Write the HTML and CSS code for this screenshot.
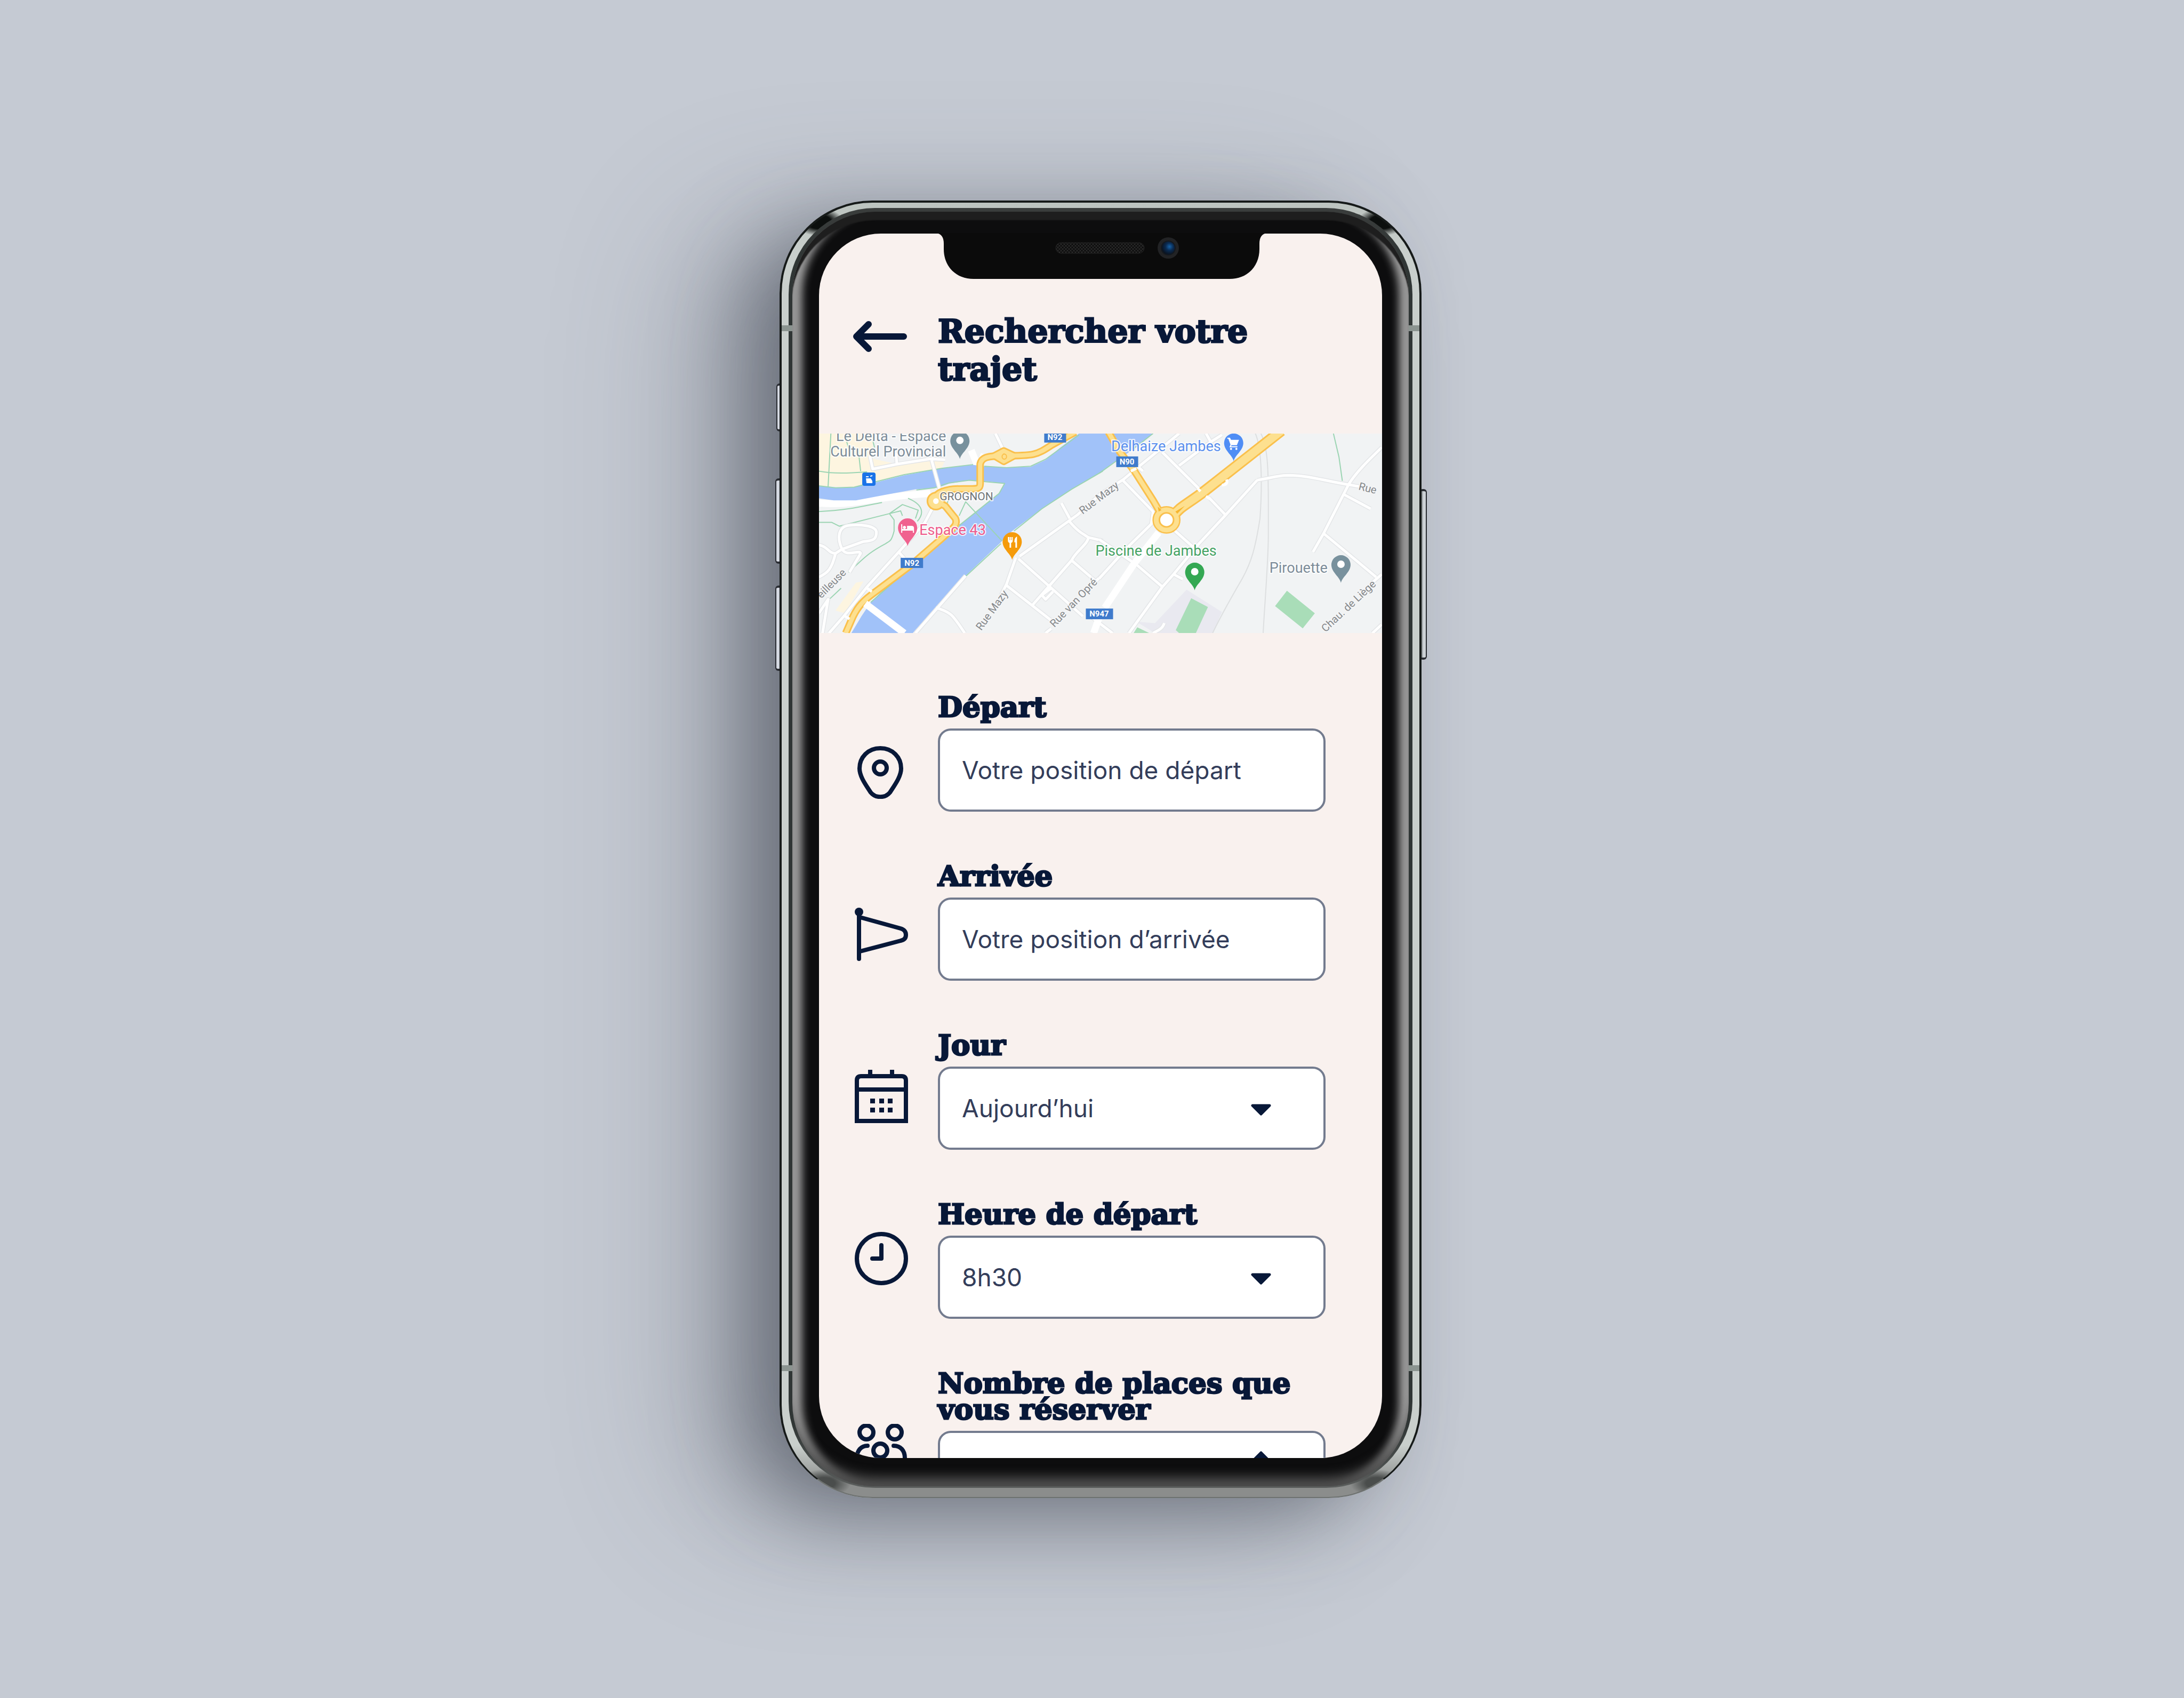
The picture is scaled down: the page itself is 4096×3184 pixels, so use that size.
FILE: index.html
```html
<!DOCTYPE html>
<html lang="fr">
<head>
<meta charset="utf-8">
<meta name="viewport" content="width=device-width, initial-scale=1">
<title>Rechercher votre trajet</title>
<link rel="stylesheet" href="styles.css">
</head>
<body>
<div class="stage">
  <div class="phone">
    <span class="side-key side-key-mute"></span>
    <span class="side-key side-key-up"></span>
    <span class="side-key side-key-down"></span>
    <span class="side-key side-key-power"></span>
    <div class="frame">
      <span class="antenna antenna-top"></span>
      <span class="antenna antenna-bottom"></span>
      <div class="rim">
        <div class="glass">
          <main class="screen">
            <header class="topbar">
              <button class="back" type="button" aria-label="Retour">
                <svg class="back-icon" viewBox="0 0 101 58" aria-hidden="true"><path d="M29 6 6 29l23 23M6 29h89"/></svg>
              </button>
              <h1 class="title">Rechercher votre trajet</h1>
            </header>

            <svg class="map" viewBox="0 0 1055 374" preserveAspectRatio="xMidYMid slice" role="img" aria-label="Carte de Jambes">
              <defs>
                <path id="pin" d="M0 0C-2-11-18-20-18-34A18 18 0 0 1 18-34C18-20 2-11 0 0Z"/>
                <path id="left-streets" d="M315 240 330 335 460 300 640 262 720 268M455 220 460 300M645 262 690 480M990 80 1030 190M650 620 610 720 470 930 300 1180 175 1390 95 1512M470 930 500 975M165 910C140 840 140 750 200 740S350 740 350 790 330 850 280 855L165 910C190 970 260 910 265 940L205 1075M40 880C90 890 90 940 130 940L165 910M130 940C110 1050 90 1080 40 1110M40 1370 90 1270 60 1512M1120 960 1430 665 1568 500M1385 705C1430 780 1460 800 1490 825L1568 850M1490 825C1490 870 1420 930 1400 990L1190 1310M1400 990 1530 1140 1568 1090M1100 970 1050 1160 1020 1240M1115 980 1460 1390M1050 1170 1290 1420M1345 580 1390 690M1290 1190 1240 1240 1260 1270 1300 1215M830 1100 560 1512M670 1330C750 1360 760 1380 825 1512M1260 1512 1290 1480M1620 1512 1510 1400"/>
                <path id="right-streets" d="M0 520 130 410 220 310 330 190 430 80M575 80 600 140 660 90M600 140 430 310M340 215 540 480M590 540 680 665M130 420 290 640 280 730 150 900 0 1120M210 320 235 350M0 840 200 1020 340 1180M400 770 510 900M850 415 680 665 530 880 400 1090 340 1180 160 1512M850 415C960 390 960 380 1030 380 1150 385 1200 420 1400 460M1520 180C1450 270 1380 360 1340 450L1210 790 1150 930M1210 800 1490 1110M1520 1090 1460 1160M1320 520 1460 620M400 1090 450 1125M350 1440C340 1490 300 1500 290 1512M1520 1450 1470 1512"/>
                <path id="n92" d="M185 1512 215 1420C240 1340 270 1290 320 1240L430 1130 540 1020 600 950 700 835C760 760 790 740 775 690L720 600 670 565C650 500 740 478 790 478 880 475 908 490 908 440V300C915 250 950 240 1035 240 1200 240 1210 235 1290 165L1420 70"/>
                <path id="n90" d="M50 70 110 210 190 350 290 560 325 640"/>
                <path id="n90-east" d="M980 60 560 500C470 590 430 610 400 670"/>
              </defs>
              <rect class="land" width="1055" height="374"/>
              <!-- west bank -->
              <g class="survey" transform="matrix(.3483 0 0 .2612 -14.3 -20.9)">
                <path class="built" d="M40 80H330V260L460 300 720 270 700 330 500 380 350 420 230 465 40 455ZM240 1150 280 1140 180 1370 130 1350Z"/>
                <path class="avenue-white" d="M40 580C250 600 280 540 640 510M860 200 900 330 930 230"/>
                <path class="water" d="M1440 80 1340 180 1260 270 1180 320 1050 325 930 315 870 305 700 330 500 380 350 430 230 465 130 470 40 455V545L120 560H240L400 520 560 480 680 470 740 440 850 415 960 425 1040 440 1010 510 880 650 780 760 600 980 440 1130 320 1290 270 1390 215 1512H545L640 1370 830 1100 1020 860 1080 780 1240 620 1400 480 1568 350 1648 270 1728 195 1838 80Z"/>
                <path class="path" d="M105 80 90 460M190 140 205 200M255 230 265 350M330 130 340 180M40 350C120 370 200 365 300 355M40 455 130 470 230 465 350 425 500 375 700 330 870 303M930 315 1050 325 1180 315 1260 265 1440 90M565 485 660 470 740 435 850 415 1040 438 1010 510 795 740M600 980 440 1150 320 1290M40 640C200 630 280 600 380 575M40 718H110L150 745 420 655 490 590 575 630 560 690M520 545C600 590 610 650 570 710M420 655 445 700V780C430 860 420 850 400 870 300 940 280 980 200 1075M420 655 480 635 490 670M160 1190 100 1265M730 580 740 550M795 670 830 570 1025 850M830 1105 1020 870M1090 780 1240 620 1400 480 1568 350"/>
                <use href="#left-streets" class="street-edge"/>
                <use href="#left-streets" class="street"/>
                <ellipse class="main-edge" cx="670" cy="565" rx="30" ry="40"/>
                <path class="main-edge" d="M985 240 1035 205 1090 240 1035 280Z"/>
                <use href="#n92" class="main-edge"/>
                <use href="#n92" class="main"/>
                <ellipse class="hub" cx="670" cy="565" rx="28" ry="38"/>
                <path class="main" d="M985 240 1035 205 1090 240 1035 280Z"/>
                <ellipse class="hub-dot" cx="1038" cy="246" rx="12" ry="18"/>
                <path class="bridge" d="M290 1300 500 1512"/>
                <path class="crossing" d="M300 1190 325 1215M175 1385 205 1410"/>
              </g>
              <!-- east bank -->
              <g class="survey" transform="matrix(.3483 0 0 .2612 525 -20.9)">
                <path class="campus" d="M470 1200 660 1360 610 1512H300L200 1430 300 1440Z"/>
                <path class="park" d="M495 1262 585 1325 520 1512H430L412 1490ZM1010 1208 1160 1370 1095 1478 946 1318ZM205 1470 270 1512H185Z"/>
                <path class="rail" d="M840 80C880 200 875 500 865 690 840 900 820 1000 770 1120 700 1280 650 1400 610 1512M870 80C915 200 910 400 910 800 910 1000 890 1300 882 1512"/>
                <path class="path" d="M180 195 290 80M1260 80 1290 250 1308 420M0 365 100 270"/>
                <use href="#right-streets" class="street-edge"/>
                <use href="#right-streets" class="street"/>
                <path class="avenue-white" d="M320 790 190 1010 30 1330M0 1400-30 1512"/>
                <ellipse class="ring-edge" cx="362" cy="700" rx="54" ry="70"/>
                <use href="#n90" class="main-edge"/>
                <use href="#n90-east" class="wide-edge"/>
                <use href="#n90" class="main"/>
                <use href="#n90-east" class="wide"/>
                <ellipse class="ring" cx="362" cy="700" rx="54" ry="70"/>
                <ellipse class="ring-core" cx="362" cy="700" rx="38" ry="50"/>
                <path class="wedge" d="M315 605 335 630 320 640ZM410 640 460 600 420 655Z"/>
                <path class="crossing" d="M530 475 545 495M575 530 595 550M660 450C690 450 690 430 685 410M170 350 200 330"/>
              </g>
              <g class="road-names">
                <text transform="translate(52 262) rotate(-45)" text-anchor="end">eilleuse</text>
                <text transform="translate(304 370) rotate(-54)">Rue Mazy</text>
                <text transform="translate(494 152) rotate(-37)">Rue Mazy</text>
                <text transform="translate(441 364) rotate(-46)">Rue van Opré</text>
                <text transform="translate(1010 105) rotate(14)">Rue</text>
                <text transform="translate(949 373) rotate(-43)">Chau. de Liège</text>
              </g>
              <g class="shields">
                <rect x="422" y="-4" width="41" height="21"/><text x="442" y="12">N92</text>
                <rect x="153" y="233" width="42" height="19"/><text x="174" y="248">N92</text>
                <rect x="557" y="43" width="41" height="20"/><text x="577" y="58">N90</text>
                <rect x="500" y="328" width="51" height="20"/><text x="525" y="343">N947</text>
              </g>
              <g class="places">
                <text class="slate" x="238" y="14" text-anchor="end">Le Delta - Espace</text>
                <text class="slate" x="238" y="43" text-anchor="end">Culturel Provincial</text>
                <text class="district" x="226" y="125">GROGNON</text>
                <text class="pink" x="188" y="190">Espace 43</text>
                <text class="blue" x="753" y="33" text-anchor="end">Delhaize Jambes</text>
                <text class="green" x="745" y="229" text-anchor="end">Piscine de Jambes</text>
                <text class="slate" x="953" y="261" text-anchor="end">Pirouette</text>
              </g>
              <g class="pins">
                <use href="#pin" x="264" y="48" fill="#78919d"/><circle cx="264" cy="13" r="7"/>
                <use href="#pin" x="166" y="211" fill="#f0628f"/>
                <path d="M154 170v16h2v-4h20v4h2v-9q0-4-5-4h-8v6h-9v-9zM160 173a3 3 0 1 0 .1 0"/>
                <use href="#pin" x="362" y="237" fill="#f59b0b"/>
                <path d="M354 194v7q0 3 3 4v9h3v-9q3-1 3-4v-7h-2v6h-1v-6h-2v6h-1v-6zM371 193q-5 2-5 11h2v10h3z"/>
                <use href="#pin" x="777" y="52" fill="#4f8df5"/>
                <path d="M765 8h5l2 4h15l-4 10h-10l-1 2h12v2h-15l2-5-4-11h-2zM772 27a2 2 0 1 0 .1 0M782 27a2 2 0 1 0 .1 0"/>
                <use href="#pin" x="704" y="294" fill="#34a853"/><circle cx="704" cy="259" r="7"/>
                <use href="#pin" x="978" y="280" fill="#78919d"/><circle cx="978" cy="245" r="7"/>
                <rect class="ferry" x="81" y="73" width="25" height="25" rx="4"/>
                <path d="M88 84h9l3 5v4H89zM88 80h5v2h-5zM96 79l4-1v2l-4 1z"/>
              </g>
            </svg>

            <form class="trip">
              <div class="icons" aria-hidden="true">
                <svg class="icon" viewBox="0 0 100 100"><path d="M48 5C25 5 9 22 9 43c0 15 12 31 21 45 9 11 27 11 36 0 9-14 21-30 21-45C87 22 71 5 48 5Z"/><circle cx="48" cy="42" r="12"/></svg>
                <svg class="icon" viewBox="0 0 100 100"><path d="M8 8v88M10 18l76 21q10 3 10 12t-10 11L10 82"/><circle class="solid" cx="8" cy="8" r="8"/></svg>
                <svg class="icon" viewBox="0 0 100 100"><path class="square" d="M4 96V20q0-8 8-8h76q8 0 8 8v76zM4 37h92M29 0v12M70 0v12"/><path class="solid" d="M29 54h9v9h-9zM46 54h9v9h-9zM62 54h9v9h-9zM29 71h9v9h-9zM46 71h9v9h-9zM62 71h9v9h-9z"/></svg>
                <svg class="icon" viewBox="0 0 100 100"><circle cx="50" cy="50" r="46"/><path d="M50 25v25H33"/></svg>
                <svg class="icon icon-people" viewBox="0 0 100 100"><circle cx="22" cy="16" r="13"/><circle cx="75" cy="16" r="13"/><circle cx="48" cy="50" r="13"/><path d="M24 41C12 41 4 50 4 64v10M73 41c13 0 21 9 21 23v10M20 100c0-16 10-26 29-26s29 10 29 26"/></svg>
              </div>
              <div class="fields">
                <div class="field">
                  <label class="label" for="depart">Départ</label>
                  <input class="control" id="depart" type="text" placeholder="Votre position de départ">
                </div>
                <div class="field">
                  <label class="label" for="arrivee">Arrivée</label>
                  <input class="control" id="arrivee" type="text" placeholder="Votre position d’arrivée">
                </div>
                <div class="field">
                  <label class="label" for="jour">Jour</label>
                  <div class="picker">
                    <select class="control" id="jour"><option>Aujourd’hui</option></select>
                    <svg class="caret" viewBox="0 0 38 22" aria-hidden="true"><path d="M3 3h32L19 19Z"/></svg>
                  </div>
                </div>
                <div class="field">
                  <label class="label" for="heure">Heure de départ</label>
                  <div class="picker">
                    <select class="control" id="heure"><option>8h30</option></select>
                    <svg class="caret" viewBox="0 0 38 22" aria-hidden="true"><path d="M3 3h32L19 19Z"/></svg>
                  </div>
                </div>
                <div class="field">
                  <label class="label" for="places">Nombre de places que vous réserver</label>
                  <div class="picker">
                    <input class="control" id="places" type="text" inputmode="numeric">
                    <svg class="caret caret-up" viewBox="0 0 38 22" aria-hidden="true"><path d="M3 19h32L19 3Z"/></svg>
                  </div>
                </div>
              </div>
            </form>
          </main>
          <svg class="notch" viewBox="0 0 620 86" aria-hidden="true">
            <defs>
              <pattern id="mesh" width="6" height="6" patternUnits="userSpaceOnUse"><path d="M0 3 3 0 6 3 3 6Z" fill="none" stroke="#2e2e2e"/></pattern>
              <radialGradient id="lens" cx=".6" cy=".4" r=".6"><stop offset="0" stop-color="#1763a8"/><stop offset=".5" stop-color="#0a2b52"/><stop offset="1" stop-color="#0a1422"/></radialGradient>
            </defs>
            <path d="M0 0Q14 2 14 20V30C14 62 36 86 70 86H550C584 86 606 62 606 30V20Q606 2 620 0Z" fill="#0b0b0b"/>
            <rect x="224" y="18" width="166" height="20" rx="10" fill="#101010"/>
            <rect x="224" y="18" width="166" height="20" rx="10" fill="url(#mesh)" stroke="#242424"/>
            <circle cx="435" cy="28" r="20" fill="#222325"/>
            <circle cx="435" cy="28" r="14" fill="#15191f"/>
            <circle cx="435" cy="28" r="12" fill="url(#lens)"/>
          </svg>
        </div>
      </div>
    </div>
  </div>
</div>
</body>
</html>
```
FILE: styles.css
```css
:root {
  --ink: #081838;
  --paper: #f9f1ee;
  --line: #737b8e;
  --display: "DejaVu Serif", serif;
  --text: Inter, "Noto Sans", sans-serif;
}

* { box-sizing: border-box; }

body {
  margin: 0;
  background: #c5cad3;
  color: var(--ink);
  font-family: var(--text);
}

.stage {
  display: flex;
  align-items: center;
  justify-content: center;
  min-height: 100vh;
  padding-left: 32px;
  overflow: hidden;
}

/* ---------- device ---------- */

.phone {
  position: relative;
  width: 100%;
  max-width: 1204px;
  aspect-ratio: 1204 / 2433;
  border-radius: 174px;
  box-shadow:
    -180px 36px 250px rgba(80, 86, 98, .26),
    -76px 40px 160px -20px rgba(54, 60, 72, .6);
}

.frame {
  position: relative;
  height: 100%;
  padding: 10px 13px 17px;
  border: 4px solid #161a19;
  border-bottom: 2px solid #6d716f;
  border-radius: 174px;
  background:
    radial-gradient(ellipse 46px 26px at 70px 36px, #0c0f0e 50%, transparent),
    radial-gradient(ellipse 46px 26px at calc(100% - 70px) 36px, #0c0f0e 50%, transparent),
    radial-gradient(ellipse 50px 26px at 80px calc(100% - 26px), #4a4d4c 40%, transparent),
    radial-gradient(ellipse 50px 26px at calc(100% - 80px) calc(100% - 26px), #4a4d4c 40%, transparent),
    linear-gradient(#bcc3bf 0, #c9cfcc 4%, #c9cfcc 96%, #8b8d8c 99%);
}

.rim {
  height: 100%;
  padding: 7px 7px 3px;
  border-radius: 162px;
  background: linear-gradient(#3a3d3c, #303635 4%, #303635 95%, #5a5d5c);
}

.glass {
  position: relative;
  height: 100%;
  padding: 41px 50px 53px;
  border-radius: 156px;
  background: #0d0d0e;
  box-shadow:
    inset 0 18px 2px -2px #1e1e1e,
    inset 0 -26px 20px -8px #4c4c4c,
    inset 26px 0 16px -8px #a2a2a2,
    inset -26px 0 16px -8px #a2a2a2;
}

.antenna {
  position: absolute;
  right: 0;
  left: 0;
  height: 11px;
  background: #8b9490;
}

.antenna-top { top: 230px; }
.antenna-bottom { bottom: 236px; }

.side-key {
  position: absolute;
  left: -8px;
  width: 14px;
  height: 160px;
  border: 2px solid #2a2d33;
  border-width: 4px 0 4px 2px;
  border-radius: 6px;
  background: linear-gradient(90deg, #d5d9e2 40%, #858b95 60%);
}

.side-key-mute { top: 343px; left: -6px; height: 90px; }
.side-key-up { top: 521px; }
.side-key-down { top: 722px; }

.side-key-power {
  top: 541px;
  right: -10px;
  left: auto;
  height: 320px;
  border-width: 4px 2px 4px 0;
  background: linear-gradient(270deg, #cdd2d6 40%, #858b8e 60%);
}

.notch {
  position: absolute;
  top: 40px;
  left: 50%;
  width: 620px;
  height: 86px;
  margin-left: -308px;
}

/* ---------- screen ---------- */

.screen {
  height: 100%;
  border-radius: 116px;
  background: var(--paper);
  overflow: hidden;
}

.topbar {
  display: flex;
  align-items: flex-start;
  gap: 56px;
  height: 375px;
  padding: 148px 106px 0 64px;
}

.back {
  flex: none;
  width: 103px;
  margin: 0;
  padding: 16px 0 0;
  border: 0;
  background: none;
  cursor: pointer;
}

.back-icon {
  display: block;
  width: 101px;
  height: 58px;
  fill: none;
  stroke: var(--ink);
  stroke-width: 12;
  stroke-linecap: round;
  stroke-linejoin: round;
}

.title {
  flex: 1;
  margin: 0;
  font: 700 60px/71px var(--display);
  -webkit-text-stroke: 3px var(--ink);
}

.trip {
  display: flex;
  gap: 56px;
  padding: 114px 106px 0 67px;
}

.icons {
  display: flex;
  flex: none;
  flex-direction: column;
  gap: 204px;
  padding-top: 97px;
}

.icon {
  width: 100px;
  height: 100px;
  fill: none;
  stroke: var(--ink);
  stroke-width: 8;
  stroke-linecap: round;
  stroke-linejoin: round;
}

.icon .solid { fill: var(--ink); stroke: none; }
.icon .square { stroke-linecap: butt; stroke-linejoin: miter; }
.icon-people { margin-top: 56px; }

.fields {
  display: flex;
  flex: 1;
  flex-direction: column;
  gap: 96px;
  min-width: 0;
}

.field {
  display: flex;
  flex-direction: column;
  gap: 16px;
}

.label {
  font: 700 53px/49px var(--display);
  -webkit-text-stroke: 3px var(--ink);
}

.control {
  display: block;
  width: 100%;
  height: 156px;
  margin: 0;
  padding: 0 41px;
  border: 4px solid var(--line);
  border-radius: 24px;
  background: #fff;
  color: #333d5a;
  font: 400 46px/56px var(--text);
  appearance: none;
}

.control::placeholder { color: #333d5a; opacity: 1; }

.picker { position: relative; }

.caret {
  position: absolute;
  top: 70px;
  right: 102px;
  width: 38px;
  height: 22px;
  fill: var(--ink);
  stroke: var(--ink);
  stroke-width: 5;
  stroke-linejoin: round;
  pointer-events: none;
}

.caret-up { top: 38px; }

/* ---------- map ---------- */

.map {
  display: block;
  width: 100%;
  height: 374px;
  overflow: hidden;
}

.survey *,
.map defs path { vector-effect: non-scaling-stroke; stroke-linejoin: round; }

.land { fill: #f1f3f4; }
.built { fill: #fdf5e0; }
.water { fill: #a1c2f9; }
.campus { fill: #e9e9f0; }
.park { fill: #a9ddb8; }
.path, .rail { fill: none; stroke: #9bd4b2; stroke-width: 2; }
.rail { stroke: #dddfe0; }
.street-edge { fill: none; stroke: #e4e6e8; stroke-width: 8; }
.street { fill: none; stroke: #fff; stroke-width: 5; }
.avenue-white { fill: none; stroke: #fff; stroke-width: 13; }
.main-edge { fill: none; stroke: #fac04c; stroke-width: 14; }
.main { fill: none; stroke: #fde08f; stroke-width: 8; }
.wide-edge { fill: none; stroke: #fac04c; stroke-width: 21; }
.wide { fill: none; stroke: #fde08f; stroke-width: 15; }
.hub { fill: #fff; stroke: #fde08f; stroke-width: 9; }
.hub-dot { fill: #fde08f; stroke: #fac04c; stroke-width: 2; }
.ring-edge { fill: #fff; stroke: #fac04c; stroke-width: 15; }
.ring { fill: #fff; stroke: #fde08f; stroke-width: 10; }
.ring-core { fill: #fff; stroke: #fac04c; stroke-width: 3; }
.wedge { fill: #f7b62f; }
.bridge { fill: none; stroke: #fff; stroke-width: 13; }
.crossing { fill: none; stroke: #fff; stroke-width: 5; }

.road-names {
  fill: #85888b;
  font: 400 20px Roboto, sans-serif;
  stroke: #f4f5f6;
  stroke-width: 4;
  paint-order: stroke;
}

.shields { fill: #3f7bcc; }
.shields text { fill: #fff; font: 700 15px Roboto, sans-serif; text-anchor: middle; }

.places {
  font: 400 27px Roboto, sans-serif;
  stroke: rgba(255, 255, 255, .8);
  stroke-width: 4;
  stroke-linejoin: round;
  paint-order: stroke;
}

.slate { fill: #7d8c99; }
.pink { fill: #ee5c8c; }
.blue { fill: #5b90ee; }
.green { fill: #46a364; }
.district { fill: #6f7478; font-size: 21px; }

.pins { fill: #fff; }
.ferry { fill: #1a73e8; }
```
